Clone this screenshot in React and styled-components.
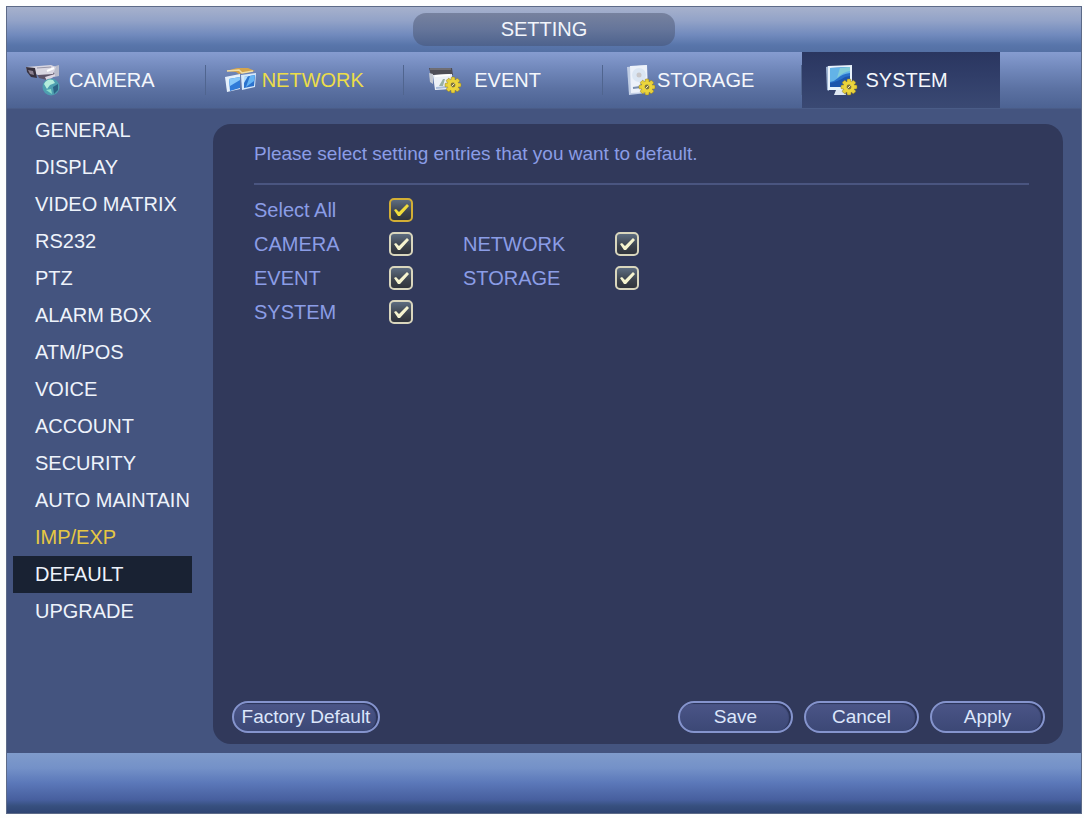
import React, { useState } from 'react'
import styled, { createGlobalStyle } from 'styled-components'


const tabs = [
    { id: 'camera', name: 'CAMERA' },
    { id: 'network', name: 'NETWORK', highlight: true },
    { id: 'event', name: 'EVENT', inset: true },
    { id: 'storage', name: 'STORAGE', inset: true },
    { id: 'system', name: 'SYSTEM', inset: true },
]

const menu = [
    'GENERAL', 'DISPLAY', 'VIDEO MATRIX', 'RS232', 'PTZ', 'ALARM BOX', 'ATM/POS',
    'VOICE', 'ACCOUNT', 'SECURITY', 'AUTO MAINTAIN', 'IMP/EXP', 'DEFAULT', 'UPGRADE',
]

const entryRows = [
    [{ id: 'all', name: 'Select All' }],
    [{ id: 'camera', name: 'CAMERA' }, { id: 'network', name: 'NETWORK' }],
    [{ id: 'event', name: 'EVENT' }, { id: 'storage', name: 'STORAGE' }],
    [{ id: 'system', name: 'SYSTEM' }],
]

const entryIds = ['camera', 'network', 'event', 'storage', 'system']


const Gear = ({ x, y }) => (
    <g transform={`translate(${x} ${y})`}>
        {[0, 45, 90, 135].map(angle => (
            <rect key={angle} x='-2' y='-8' width='4' height='16' rx='1' fill='#e6cf3a' stroke='#8d7a24' strokeWidth='0.5' transform={`rotate(${angle})`}/>
        ))}
        <circle r='5.5' fill='#ecd63c'/>
        <circle r='2.4' fill='#7d7440'/>
        <path d='M-1.5 1.5 L1.5 -1.5' stroke='#f6efb0' strokeWidth='1'/>
    </g>
)

const CameraIcon = () => (
    <svg width='44' height='34' viewBox='0 0 44 34' aria-hidden='true'>
        <path d='M27 4 L34 2 L34 13 L29 14 Z' fill='#b9bccb'/>
        <path d='M12 11 L28 8 L30 12 L22 17 L14 15 Z' fill='#5d5468'/>
        <path d='M20 14 L30 11 L30 13 L22 18 Z' fill='#ded8e4'/>
        <path d='M1 4 L26 2 L31 4 L28 11 L13 12 L2 8 Z' fill='#d9d7e2'/>
        <path d='M1 4 L10 5 L12 15 L6 14 L2 9 Z' fill='#37313f'/>
        <path d='M3 7 L8 8 L9 12 L5 11 Z' fill='#8b8090'/>
        <path d='M12 5 L26 4' stroke='#9896a8' strokeWidth='1'/>
        <path d='M22 8 L29 5' stroke='#fff' strokeWidth='2'/>
        <circle cx='26' cy='24' r='8.5' fill='#4e9fb0'/>
        <path d='M19 21 Q22 15 28 17 L30 20 L25 22 L22 26 Z' fill='#b4ecdc'/>
        <path d='M28 24 L33 21 L33 27 L29 31 Z' fill='#2c6384'/>
        <path d='M21 27 L26 26 L27 31 Z' fill='#8bdccb'/>
    </svg>
)

const NetworkIcon = () => (
    <svg width='38' height='34' viewBox='0 0 38 34' aria-hidden='true'>
        <path d='M2 8 L13 5 L24 5 L31 8 L20 10 L15 11 L12 9 Z' fill='#d4a44d'/>
        <path d='M3 8 L15 7 L18 10 L29 8' stroke='#f4dfa5' strokeWidth='1.5' fill='none'/>
        <path d='M1 14 L16 11 L16 26 L3 29 Z' fill='#e5f0fb'/>
        <path d='M5 16 L16 14 L16 25 L6 28 Z' fill='#2f7bd8'/>
        <path d='M5 16 L16 14 L16 17 L6 23 Z' fill='#87c8fa'/>
        <path d='M17 12 L32 10 L31 24 L18 27 Z' fill='#d7e9fb'/>
        <path d='M20 14 L31 12 L30 23 L20 25 Z' fill='#2b72cd'/>
        <path d='M26 13 L31 12 L30 18 L22 24 Z' fill='#65b5f5'/>
        <path d='M20 14 L24 13 L20 20 Z' fill='#b5defc'/>
    </svg>
)

const EventIcon = () => (
    <svg width='46' height='34' viewBox='0 0 46 34' aria-hidden='true'>
        <path d='M1 5 L24 5 L25 12 L3 13 Z' fill='#4e4d56'/>
        <path d='M2 6 L23 6' stroke='#8f8e91' strokeWidth='1'/>
        <path d='M1 10 L5 11 L5 21 L2 19 Z' fill='#c5c9d2'/>
        <path d='M5 12 L24 11 L24 26 L7 27 Z' fill='#edf1f7'/>
        <path d='M7 13 L22 12' stroke='#fff' strokeWidth='2'/>
        <path d='M11 23 L15 16 L17 16 L15 23 Z' fill='#98b0a4'/>
        <path d='M8 25 L19 24' stroke='#aabddb' strokeWidth='2'/>
        <Gear x={25} y={22}/>
    </svg>
)

const StorageIcon = () => (
    <svg width='30' height='34' viewBox='0 0 30 34' aria-hidden='true'>
        <path d='M0 4 L19 2 L20 30 L2 32 Z' fill='#c0cde4'/>
        <path d='M3 3 L20 2 L21 29 L4 30 Z' fill='#edf2fa'/>
        <circle cx='12' cy='12' r='7' fill='#dbe6f3'/>
        <circle cx='12' cy='12' r='2.5' fill='#c9c7c9'/>
        <path d='M6 25 L13 24 L16 19' stroke='#7b8faf' strokeWidth='2' fill='none'/>
        <Gear x={20} y={24}/>
    </svg>
)

const SystemIcon = () => (
    <svg width='40' height='34' viewBox='0 0 40 34' aria-hidden='true'>
        <path d='M0 4 L3 3 L3 28 L1 27 Z' fill='#9fb5d3'/>
        <path d='M2 3 L26 2 L26 27 L2 27 Z' fill='#e8f2fb'/>
        <path d='M4 5 L24 4 L24 24 L4 24 Z' fill='#2870c9'/>
        <path d='M4 5 L24 4 L24 10 Q16 11 12 15 Q9 18 4 19 Z' fill='#63b3e7'/>
        <path d='M14 5 L24 4 L24 8 Q17 9 11 15 Z' fill='#83cdd7'/>
        <path d='M4 20 Q13 18 19 14 L24 13 L24 19 L14 24 L4 24 Z' fill='#1c55ac'/>
        <path d='M10 27 L18 27 L20 32 L8 32 Z' fill='#dfe8f2'/>
        <Gear x={23} y={24}/>
    </svg>
)

const icons = {
    camera: CameraIcon,
    network: NetworkIcon,
    event: EventIcon,
    storage: StorageIcon,
    system: SystemIcon,
}


const CheckBox = ({ id, checked, focused, onChange }) => (
    <StyledCheckBox $focused={focused}>
        <input type='checkbox' id={id} checked={checked} onChange={onChange}/>
        {checked && (
            <svg width='24' height='24' viewBox='0 0 24 24' aria-hidden='true'>
                <path d='M5 12 L7 11 L10 14 L18 6 L20 8 L11 18 L9 18 Z' fill='currentColor'/>
            </svg>
        )}
    </StyledCheckBox>
)


const App = () => {
    const [tab, setTab] = useState('system')
    const [page, setPage] = useState('DEFAULT')
    const [selected, setSelected] = useState(entryIds)

    const isChecked = id => id === 'all' ? selected.length === entryIds.length : selected.includes(id)

    const toggle = id => {
        if (id === 'all') {
            setSelected(isChecked('all') ? [] : entryIds)
        } else {
            setSelected(isChecked(id) ? selected.filter(item => item !== id) : [...selected, id])
        }
    }

    return (
        <Page>
            <GlobalStyle/>
            <Window>
                <TitleBar>
                    <Title>SETTING</Title>
                </TitleBar>

                <Tabs>
                    {tabs.map(({ id, name, highlight, inset }) => {
                        const Icon = icons[id]
                        return (
                            <Tab key={id} type='button' $active={tab === id} $highlight={highlight} $inset={inset} onClick={() => setTab(id)}>
                                <Icon/>
                                {name}
                            </Tab>
                        )
                    })}
                </Tabs>

                <Body>
                    <Sidebar>
                        {menu.map(name => (
                            <MenuItem key={name} type='button' $active={page === name} $highlight={name === 'IMP/EXP'} onClick={() => setPage(name)}>
                                {name}
                            </MenuItem>
                        ))}
                    </Sidebar>

                    <Panel onSubmit={e => e.preventDefault()}>
                        <Content>
                            <Hint>Please select setting entries that you want to default.</Hint>
                            <Entries>
                                {entryRows.map(row => (
                                    <EntryRow key={row[0].id}>
                                        {row.map(({ id, name }) => (
                                            <React.Fragment key={id}>
                                                <label htmlFor={`entry-${id}`}>{name}</label>
                                                <CheckBox id={`entry-${id}`} checked={isChecked(id)} focused={id === 'all'} onChange={() => toggle(id)}/>
                                            </React.Fragment>
                                        ))}
                                    </EntryRow>
                                ))}
                            </Entries>
                        </Content>

                        <Actions>
                            <Button type='button' $wide onClick={() => setSelected(entryIds)}>Factory Default</Button>
                            <Button type='submit'>Save</Button>
                            <Button type='button'>Cancel</Button>
                            <Button type='button'>Apply</Button>
                        </Actions>
                    </Panel>
                </Body>

                <Footer/>
            </Window>
        </Page>
    )
}


const GlobalStyle = createGlobalStyle`
    *{
        box-sizing: border-box;
    }
    body{
        margin: 0;
        background: #fdfefe;
        font-family: 'Liberation Sans', Arial, sans-serif;
        font-size: 20px;
    }
    button{
        font: inherit;
        cursor: pointer;
    }
`;

const Page = styled.div`
    display: flex;
    min-height: 100vh;
    padding: 6px 2px 4px 6px;
`;

const Window = styled.main`
    flex: 1;
    display: flex;
    flex-direction: column;
    border: 1px solid #5c6a88;
    background: #44547f;
`;

const TitleBar = styled.header`
    display: flex;
    justify-content: center;
    align-items: center;
    height: 45px;
    padding-bottom: 1px;
    background: linear-gradient(#a6b1cc, #93a3c8 30%, #718abd 62%, #5875aa 85%, #5470a4);
`;

const Title = styled.h1`
    width: 262px;
    margin: 0;
    border-radius: 13px;
    background: linear-gradient(#77829f, #65759a 50%, #4d628d);
    color: #f2f5fb;
    font-size: 20px;
    font-weight: normal;
    line-height: 33px;
    text-align: center;
`;

const Tabs = styled.nav`
    display: grid;
    grid-template-columns: repeat(5, 199fr) 81fr;
    height: 57px;
    border-bottom: 1px solid #4a5c87;
    background: linear-gradient(#869cd0, #7188bb 30%, #5c72a3 65%, #4c6292);
`;

const Tab = styled.button`
    display: flex;
    align-items: center;
    padding: 0 0 0 ${({ $inset }) => $inset ? '24px' : '18px'};
    border: none;
    background: ${({ $active }) => $active
        ? 'linear-gradient(#2a3660, #303d68 40%, #3a4973)'
        : 'linear-gradient(#50658f, #50658f) no-repeat right center / 1px 30px'};
    color: ${({ $highlight }) => $highlight ? '#ecdd49' : '#f4f7fc'};

    svg{
        flex: none;
    }
`;

const Body = styled.div`
    flex: 1;
    display: flex;
`;

const Sidebar = styled.nav`
    display: flex;
    flex-direction: column;
    width: 206px;
    padding: 3px 21px 20px 6px;
`;

const MenuItem = styled.button`
    padding: 0 0 0 22px;
    border: none;
    background: ${({ $active }) => $active ? '#192233' : 'transparent'};
    color: ${({ $highlight }) => $highlight ? '#e6c843' : '#eef3fb'};
    line-height: 37px;
    text-align: left;
    white-space: nowrap;
`;

const Panel = styled.form`
    flex: 1;
    display: flex;
    flex-direction: column;
    justify-content: space-between;
    margin: 15px 18px 9px 0;
    padding: 12px 18px 11px 19px;
    border-radius: 18px;
    background: #31395b;
    color: #8b9de6;
`;

const Content = styled.div`
    padding: 0 16px 0 22px;
`;

const Hint = styled.p`
    margin: 0;
    padding-bottom: 11px;
    border-bottom: 2px solid #4a5580;
    font-size: 19px;
    line-height: 36px;
`;

const Entries = styled.div`
    padding-top: 8px;
`;

const EntryRow = styled.div`
    display: grid;
    grid-template-columns: 135px 74px 152px 24px;
    align-items: center;
    height: 34px;
`;

const StyledCheckBox = styled.span`
    display: grid;
    width: 24px;
    height: 24px;
    color: ${({ $focused }) => $focused ? '#f0dc3c' : '#f6f4cf'};

    input, svg{
        grid-area: 1 / 1;
    }
    input{
        appearance: none;
        width: 24px;
        height: 24px;
        margin: 0;
        border: 2px solid ${({ $focused }) => $focused ? '#d2ae35' : '#d9d6bd'};
        border-radius: 5px;
        background: linear-gradient(#5d6c80, #3c424c 60%, #30343c);
        cursor: pointer;
    }
    svg{
        pointer-events: none;
    }
`;

const Actions = styled.div`
    display: flex;
    gap: 11px;
`;

const Button = styled.button`
    width: ${({ $wide }) => $wide ? '148px' : '115px'};
    height: 32px;
    margin-right: ${({ $wide }) => $wide ? 'auto' : '0'};
    padding: 0;
    border: 2px solid #8594cd;
    border-radius: 16px;
    background: linear-gradient(#4b5587, #3c4876);
    box-shadow: inset -2px 1px 1px #2b3458;
    color: #dce6fb;
    font-size: 19px;
    line-height: 28px;
    white-space: nowrap;
`;

const Footer = styled.footer`
    height: 60px;
    background: linear-gradient(#7f9bcb, #7491c8 25%, #5b78b9 50%, #475f9e 78%, #37507f 88%, #2f4573);
`;

export default App
